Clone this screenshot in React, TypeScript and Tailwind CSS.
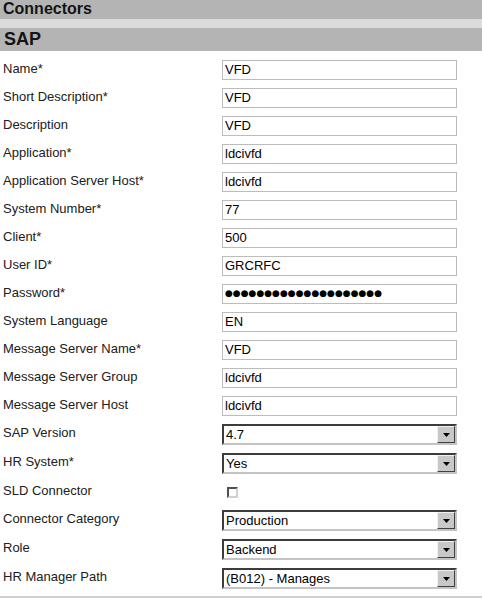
import React from "react";

type Field =
  | { label: string; kind: "text"; value: string }
  | { label: string; kind: "password"; value: string }
  | { label: string; kind: "select"; value: string }
  | { label: string; kind: "check" };

const FIELDS: Field[] = [
  { label: "Name*", kind: "text", value: "VFD" },
  { label: "Short Description*", kind: "text", value: "VFD" },
  { label: "Description", kind: "text", value: "VFD" },
  { label: "Application*", kind: "text", value: "ldcivfd" },
  { label: "Application Server Host*", kind: "text", value: "ldcivfd" },
  { label: "System Number*", kind: "text", value: "77" },
  { label: "Client*", kind: "text", value: "500" },
  { label: "User ID*", kind: "text", value: "GRCRFC" },
  { label: "Password*", kind: "password", value: "●●●●●●●●●●●●●●●●●●●●" },
  { label: "System Language", kind: "text", value: "EN" },
  { label: "Message Server Name*", kind: "text", value: "VFD" },
  { label: "Message Server Group", kind: "text", value: "ldcivfd" },
  { label: "Message Server Host", kind: "text", value: "ldcivfd" },
  { label: "SAP Version", kind: "select", value: "4.7" },
  { label: "HR System*", kind: "select", value: "Yes" },
  { label: "SLD Connector", kind: "check" },
  { label: "Connector Category", kind: "select", value: "Production" },
  { label: "Role", kind: "select", value: "Backend" },
  { label: "HR Manager Path", kind: "select", value: "(B012) - Manages" },
];

function Control({ f }: { f: Field }) {
  if (f.kind === "check") {
    return (
      <div className="ml-[5px] h-[11px] w-[11px] border-2 border-t-[#505050] border-l-[#505050] border-b-[#d0d0d0] border-r-[#d0d0d0] bg-white" />
    );
  }
  if (f.kind === "select") {
    return (
      <div className="flex h-[21px] w-[235px] items-stretch border-2 border-t-[#3c3c3c] border-l-[#3c3c3c] border-b-[#c4c4c4] border-r-[#c4c4c4] bg-white">
        <span className="flex-1 pl-[2px] text-[13px] leading-[17px] text-black">{f.value}</span>
        <span className="flex w-[18px] items-center justify-center border border-t-[#f0f0f0] border-l-[#f0f0f0] border-b-[#404040] border-r-[#404040] bg-[#c8c8c8]">
          <svg width="7" height="4" viewBox="0 0 7 4">
            <path d="M0 0h7L3.5 4z" fill="#000" />
          </svg>
        </span>
      </div>
    );
  }
  return (
    <div className="flex h-[20px] w-[235px] items-center border border-[#bcbcbc] bg-white pl-[2px] pb-[1px]">
      <span
        className={
          f.kind === "password"
            ? "font-['DejaVu_Sans',sans-serif] text-[9px] leading-none text-black"
            : "text-[13px] leading-none text-black"
        }
      >
        {f.value}
      </span>
    </div>
  );
}

export default function App() {
  return (
    <div className="w-[482px] h-[599px] overflow-hidden bg-white font-['Liberation_Sans',Arial,sans-serif]">
      <div className="h-[19px] bg-[#b4b4b4] pl-[3px] text-[16px] font-bold leading-[17px] text-[#141414]">Connectors</div>
      <div className="h-[9px] bg-[#dcdcdc]" />
      <div className="h-[23px] bg-[#b4b4b4] pl-[4px] text-[18px] font-bold leading-[22px] text-[#141414]">SAP</div>
      <div className="pt-[5px]">
        {FIELDS.map((f) => (
          <div
            key={f.label}
            className={`flex items-center ${f.kind === "select" ? "h-[29px]" : "h-[28px]"}`}
          >
            <div className="w-[222px] pl-[3px] pb-[3px] text-[13px] text-[#202020]">{f.label}</div>
            <Control f={f} />
          </div>
        ))}
      </div>
      <div className="mt-[3px] h-[2px] bg-[#d0d0d0]" />
    </div>
  );
}
